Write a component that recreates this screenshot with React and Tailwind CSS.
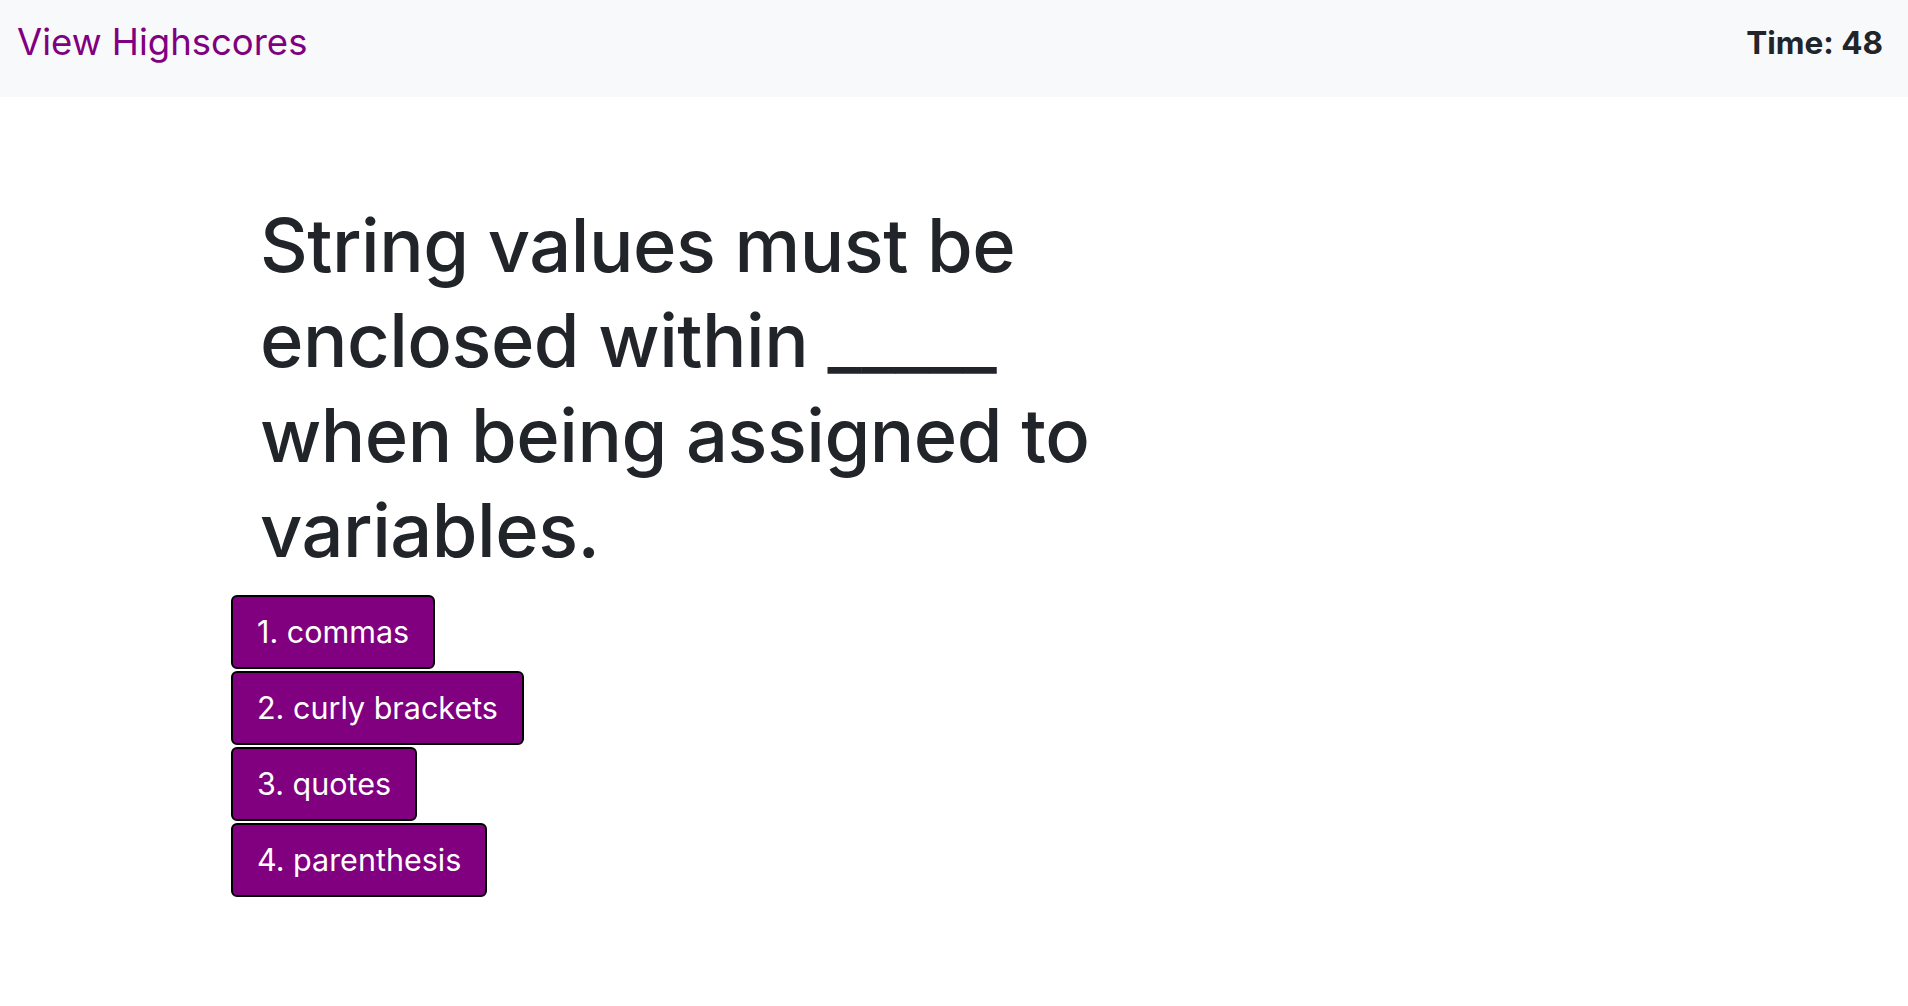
import React from 'react';

const choices = ['1. commas', '2. curly brackets', '3. quotes', '4. parenthesis'];

const App = () => {
  return (
    <div className="min-h-screen bg-white font-['Inter',sans-serif] text-[#212529]">
      <nav className="h-[97px] bg-[#f8f9fa] flex items-start justify-between pl-[17px] pr-[25px]">
        <a href="#" className="mt-[18px] text-[36.5px] leading-[48px] text-[#800080]">View Highscores</a>
        <div className="mt-[23px] text-[31.5px] leading-[40px] font-bold">Time: 48</div>
      </nav>

      <main className="pl-[231px] pt-[101px]">
        <h1 className="pl-[29px] w-[920px] text-[74px] leading-[95px] font-medium tracking-[-0.5px] mb-[17px]">
          String values must be enclosed within _____ when being assigned to variables.
        </h1>
        <div className="flex flex-col items-start gap-[2px]">
          {choices.map(c => (
            <button
              key={c}
              className="h-[74px] px-[24px] bg-[#800080] text-white text-[30.5px] border-2 border-black rounded-[6px]"
            >
              {c}
            </button>
          ))}
        </div>
      </main>
    </div>
  );
};

export default App;
